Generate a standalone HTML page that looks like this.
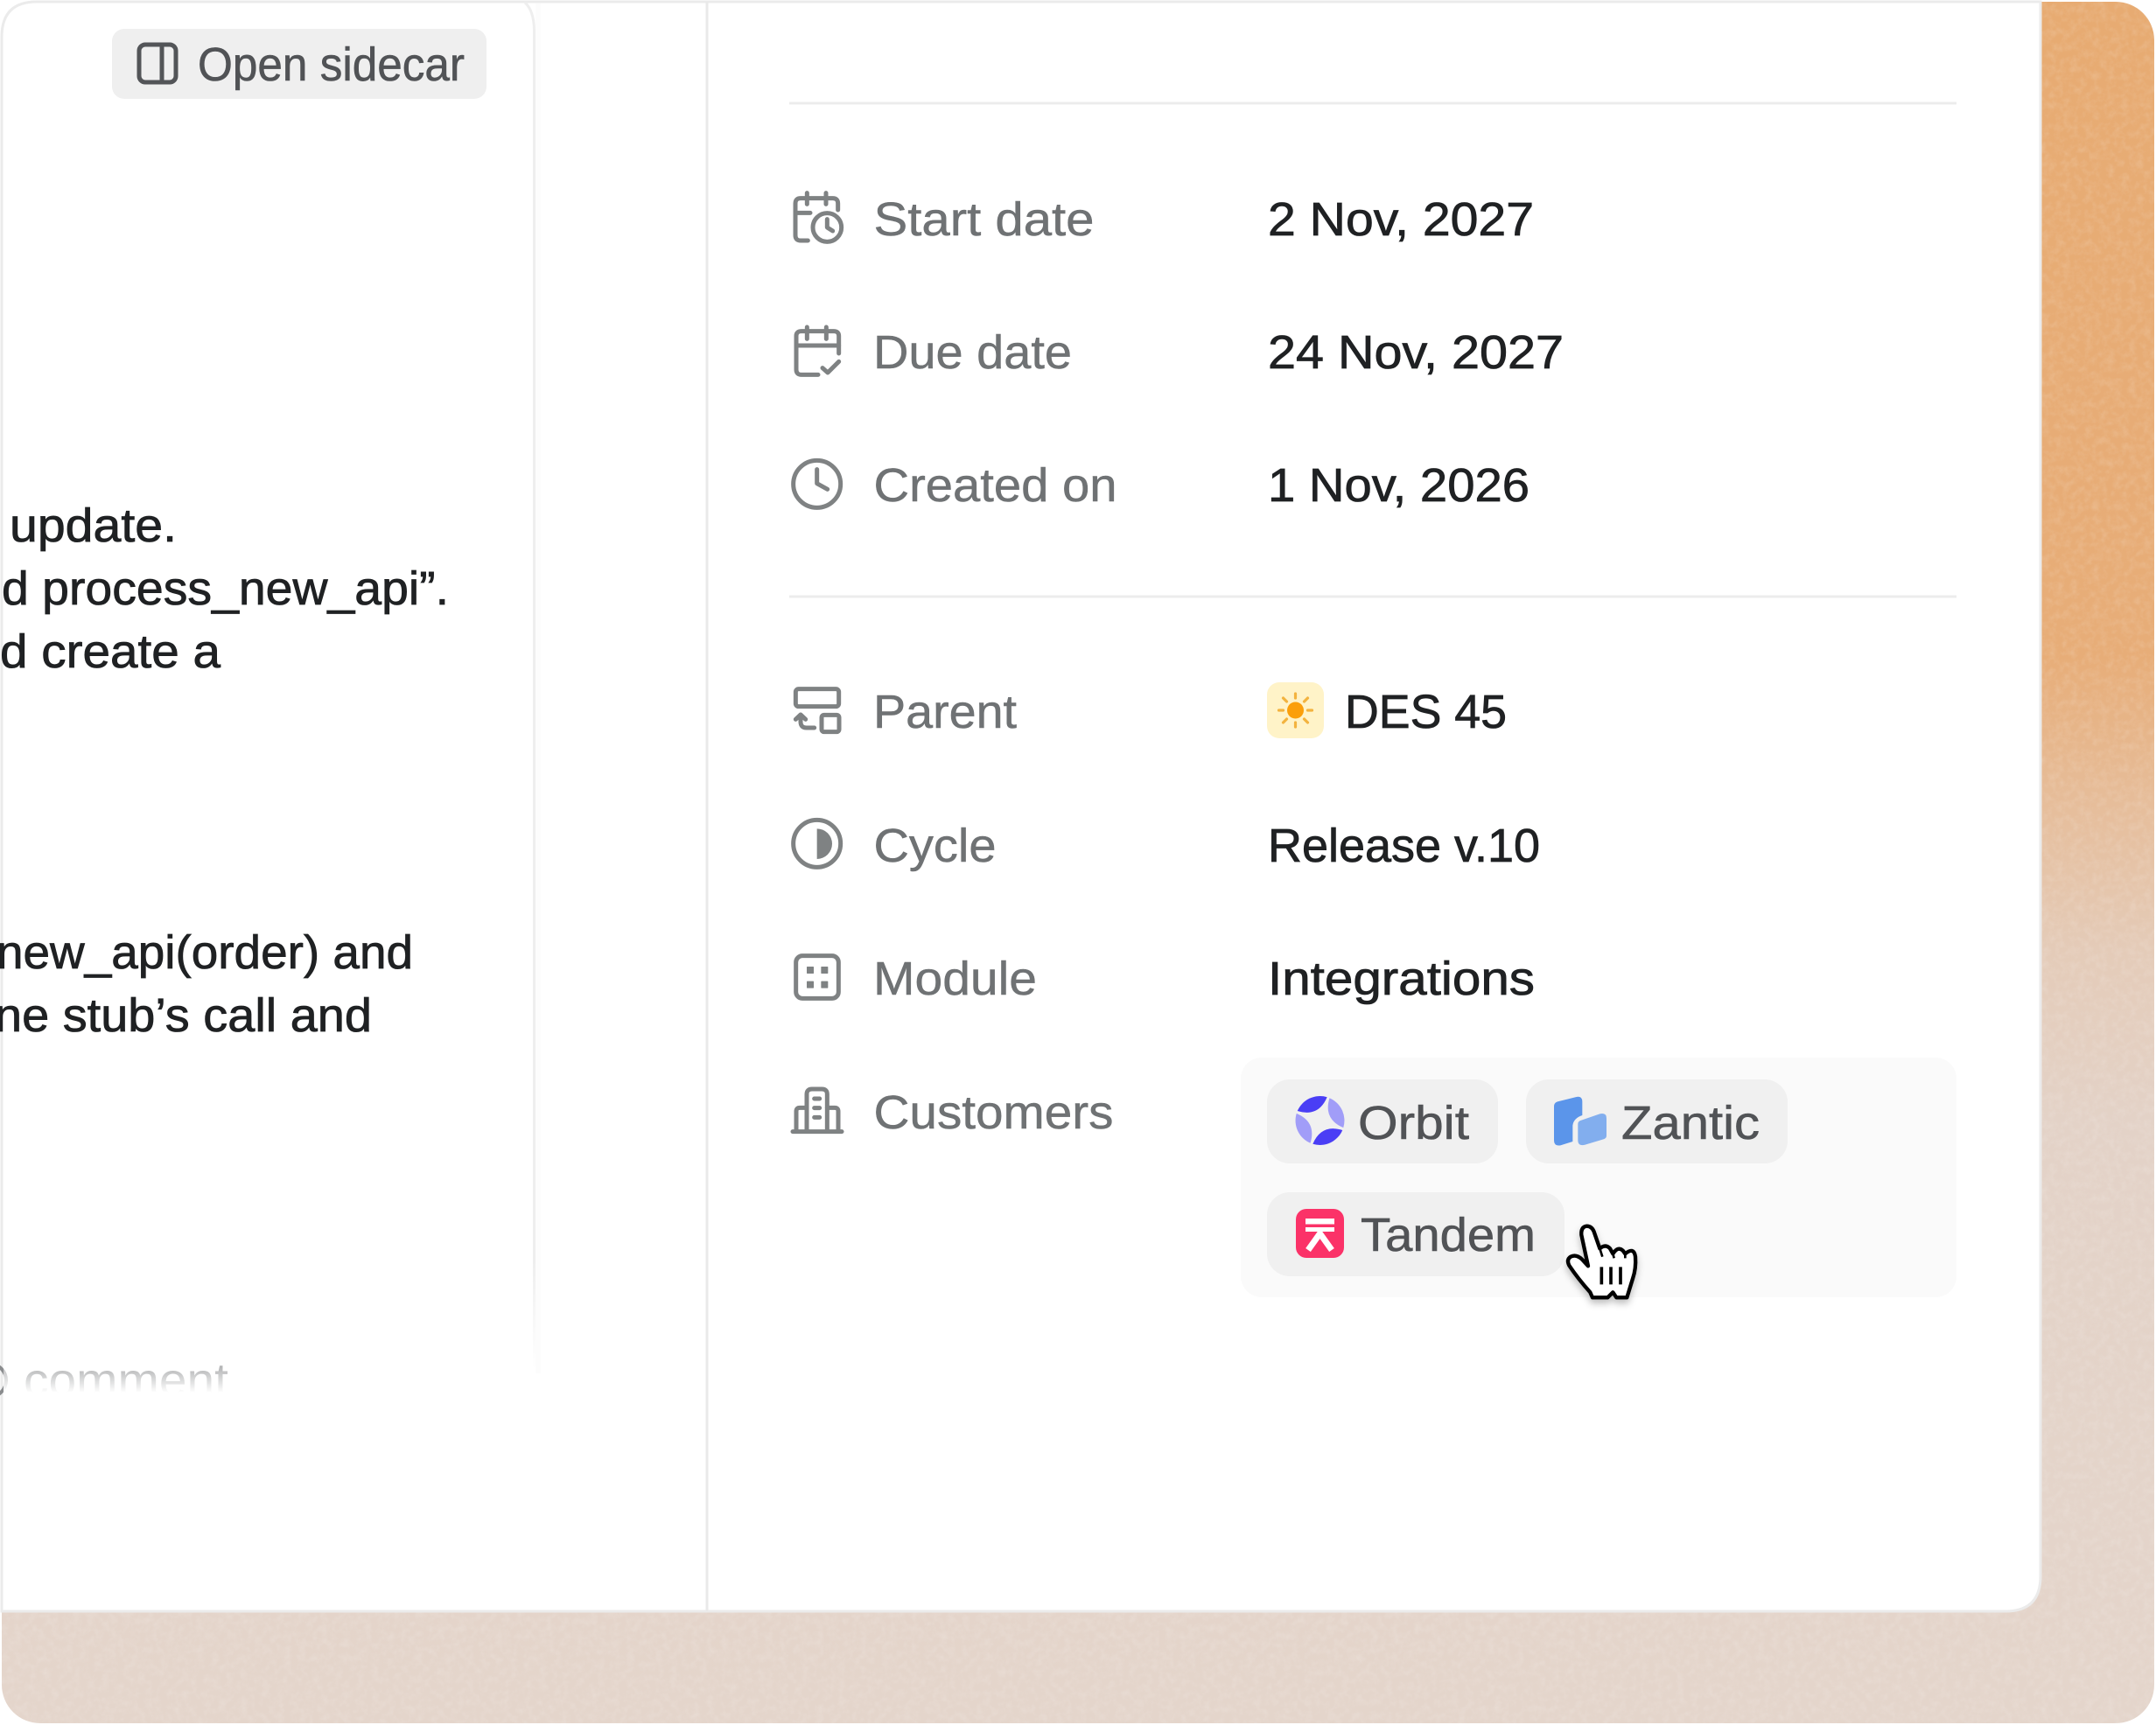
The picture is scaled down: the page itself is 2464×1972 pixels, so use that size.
<!DOCTYPE html>
<html lang="en">
<head>
<meta charset="utf-8">
<title>Issue properties</title>
<style>
html,body{margin:0;padding:0;background:#fff;width:2464px;height:1972px;overflow:hidden}
svg{display:block}
text{font-family:"Liberation Sans",sans-serif}
.l{font-size:54px;fill:#6f7274;stroke:#6f7274;stroke-width:.5px}
.v{font-size:54px;fill:#1f2123;stroke:#1f2123;stroke-width:.8px}
.p{font-size:54px;fill:#515356;stroke:#515356;stroke-width:.6px}
.i{fill:none;stroke:#7f8283;stroke-linecap:round;stroke-linejoin:round}
</style>
</head>
<body>
<svg width="2464" height="1972" viewBox="0 0 2464 1972" xmlns="http://www.w3.org/2000/svg">
<defs>
<linearGradient id="bg" x1="0" y1="0" x2="0" y2="1">
<stop offset="0" stop-color="#E7AB72"/>
<stop offset="0.38" stop-color="#E7AD78"/>
<stop offset="0.46" stop-color="#E6BC98"/>
<stop offset="0.55" stop-color="#E4CBB8"/>
<stop offset="0.65" stop-color="#E3D2C7"/>
<stop offset="1" stop-color="#E4D5CB"/>
</linearGradient>
<filter id="noise" x="0" y="0" width="100%" height="100%">
<feTurbulence type="fractalNoise" baseFrequency="0.12" numOctaves="4" seed="4"/>
<feColorMatrix type="matrix" values="0 0 0 0 1  0 0 0 0 1  0 0 0 0 1  1.6 0 0 0 -0.62"/>
</filter>
<linearGradient id="fade" x1="0" y1="0" x2="0" y2="1">
<stop offset="0" stop-color="#fff" stop-opacity="0.25"/>
<stop offset="1" stop-color="#fff" stop-opacity="1"/>
</linearGradient>
<linearGradient id="lineFade" x1="0" y1="0" x2="0" y2="1">
<stop offset="0" stop-color="#eeeeee"/>
<stop offset="1" stop-color="#eeeeee" stop-opacity="0"/>
</linearGradient>
<filter id="cs" x="-30%" y="-30%" width="160%" height="170%">
<feDropShadow dx="0" dy="14" stdDeviation="12" flood-color="#000" flood-opacity=".25"/>
</filter>
</defs>

<!-- backdrop -->
<rect x="2" y="2" width="2460" height="1968" rx="44" fill="url(#bg)"/>
<rect x="2" y="2" width="2460" height="1968" rx="44" filter="url(#noise)" opacity=".17"/>

<!-- card -->
<path d="M2 42 Q2 2 42 2 H2332 V1802 Q2332 1842 2292 1842 H2 Z" fill="#fff" stroke="#ebebeb" stroke-width="3"/>
<rect x="612" y="4" width="6" height="1566" fill="#fcfcfc"/>
<path d="M600 3 Q610 12 610.500 34 V1440" fill="none" stroke="#eeeeee" stroke-width="3"/>
<rect x="609" y="1440" width="3" height="125" fill="url(#lineFade)"/>
<rect x="806.500" y="2" width="3" height="1840" fill="#e9e9e9"/>

<!-- open sidecar -->
<rect x="128" y="33" width="428" height="80" rx="14" fill="#efefef"/>
<g fill="none" stroke="#535558" stroke-width="5">
<rect x="159" y="51" width="42" height="43" rx="7"/>
<path d="M185 51 V94"/>
</g>
<text class="p" x="226" y="92" textLength="305" lengthAdjust="spacingAndGlyphs">Open sidecar</text>

<!-- left text -->
<text class="v" x="11" y="619" textLength="191" lengthAdjust="spacingAndGlyphs">update.</text>
<text class="v" x="2" y="691" textLength="511" lengthAdjust="spacingAndGlyphs">d process_new_api”.</text>
<text class="v" x="0" y="763" textLength="252" lengthAdjust="spacingAndGlyphs">d create a</text>
<text class="v" x="-4" y="1107" textLength="476" lengthAdjust="spacingAndGlyphs">new_api(order) and</text>
<text class="v" x="-6" y="1179" textLength="431" lengthAdjust="spacingAndGlyphs">ne stub’s call and</text>
<text x="27" y="1596" font-size="54" fill="#77797b" textLength="234" lengthAdjust="spacingAndGlyphs">comment</text>
<circle cx="-12" cy="1578" r="19" fill="none" stroke="#8a8c8e" stroke-width="4"/>
<rect x="4" y="1552" width="440" height="40" fill="url(#fade)"/>
<rect x="4" y="1592" width="440" height="26" fill="#fff"/>

<!-- dividers -->
<rect x="902" y="116.500" width="1334" height="3" fill="#ececec"/>
<rect x="902" y="680.500" width="1334" height="3" fill="#ececec"/>

<!-- icons group 1 -->
<g transform="translate(860,180) scale(.33333)" class="i" stroke-width="15">
<path d="M190 285 H165 Q147 285 147 267 V158 Q147 140 165 140 H275 Q293 140 293 158 V180"/>
<path d="M187 122 V160 M252 122 V160 M147 190 H198"/>
<circle cx="256" cy="240" r="49"/>
<path d="M256 212 V240 L275 252"/>
<path d="M225 745 H168 Q150 745 150 727 V612 Q150 596 168 596 H278 Q296 596 296 612 V672"/>
<path d="M187 582 V622 M253 582 V622 M150 645 H296"/>
<path d="M240 722 L258 738 L296 700"/>
<circle cx="221" cy="1120" r="81"/>
<path d="M221 1070 V1118 L257 1138"/>
</g>
<!-- icons group 2 -->
<g transform="translate(860,740) scale(.33333)" class="i" stroke-width="15">
<rect x="148" y="143" width="148" height="60" rx="10"/>
<rect x="237" y="232" width="60" height="58" rx="8"/>
<path d="M212 276 H185 Q165 276 165 255 V235"/>
<path d="M148 247 L165 231 L182 247"/>
<circle cx="221" cy="673" r="81"/>
<path d="M221 622 A52 52 0 0 1 221 726 Z" fill="#7f8283" stroke="none"/>
<rect x="149" y="1058" width="146" height="146" rx="22"/>
<g fill="#7f8283" stroke="none">
<rect x="186" y="1095" width="24" height="24" rx="2"/><rect x="235" y="1095" width="24" height="24" rx="2"/>
<rect x="186" y="1145" width="24" height="24" rx="2"/><rect x="235" y="1145" width="24" height="24" rx="2"/>
</g>
</g>
<!-- customers icon -->
<g transform="translate(890,1225) scale(.33333)" class="i" stroke-width="15">
<path d="M48 206 H216"/>
<path d="M96 204 V78 Q96 60 114 60 H148 Q166 60 166 78 V204"/>
<path d="M96 124 H72 Q60 124 60 136 V204"/>
<path d="M166 124 H192 Q204 124 204 136 V204"/>
<path d="M122 93 H140 M122 125 H140 M122 157 H140"/>
</g>

<!-- labels -->
<text class="l" x="998.500" y="269" textLength="252" lengthAdjust="spacingAndGlyphs">Start date</text>
<text class="l" x="998" y="421" textLength="227" lengthAdjust="spacingAndGlyphs">Due date</text>
<text class="l" x="998.500" y="573" textLength="278" lengthAdjust="spacingAndGlyphs">Created on</text>
<text class="l" x="998" y="832" textLength="164" lengthAdjust="spacingAndGlyphs">Parent</text>
<text class="l" x="998.500" y="985" textLength="140" lengthAdjust="spacingAndGlyphs">Cycle</text>
<text class="l" x="998" y="1137" textLength="187" lengthAdjust="spacingAndGlyphs">Module</text>
<text class="l" x="998.500" y="1290" textLength="274" lengthAdjust="spacingAndGlyphs">Customers</text>

<!-- values -->
<text class="v" x="1449" y="269" textLength="304" lengthAdjust="spacingAndGlyphs">2 Nov, 2027</text>
<text class="v" x="1449" y="421" textLength="338" lengthAdjust="spacingAndGlyphs">24 Nov, 2027</text>
<text class="v" x="1449" y="573" textLength="299" lengthAdjust="spacingAndGlyphs">1 Nov, 2026</text>
<text class="v" x="1537" y="832" textLength="185" lengthAdjust="spacingAndGlyphs">DES 45</text>
<text class="v" x="1449" y="985" textLength="311" lengthAdjust="spacingAndGlyphs">Release v.10</text>
<text class="v" x="1449" y="1137" textLength="305" lengthAdjust="spacingAndGlyphs">Integrations</text>

<!-- sun badge -->
<rect x="1448" y="780" width="65" height="64" rx="14" fill="#FFF3C8"/>
<circle cx="1480.500" cy="812" r="9.500" fill="#FB9F0B"/>
<g stroke="#F3B33F" stroke-width="3.200" stroke-linecap="round" transform="translate(1480.500,812)">
<path d="M0 -14 V-19 M0 14 V19 M-14 0 H-19 M14 0 H19 M-10 -10 L-14 -14 M10 -10 L14 -14 M-10 10 L-14 14 M10 10 L14 14"/>
</g>

<!-- customers panel -->
<rect x="1418" y="1209" width="818" height="274" rx="24" fill="#fafafa"/>
<rect x="1448" y="1234" width="264" height="96" rx="26" fill="#f0f0f0"/>
<rect x="1744" y="1234" width="299" height="96" rx="26" fill="#f0f0f0"/>
<rect x="1448" y="1363" width="340" height="96" rx="26" fill="#f0f0f0"/>

<!-- orbit logo -->
<g transform="translate(1508.500,1281)">
<path transform="rotate(-25)" d="M-18.700 -20.800 A28 28 0 0 1 18.700 -20.800 Q0 -4 -18.700 -20.800Z" fill="#4A3EF5"/>
<path transform="rotate(65)" d="M-18.700 -20.800 A28 28 0 0 1 18.700 -20.800 Q0 -4 -18.700 -20.800Z" fill="#A19DF8"/>
<path transform="rotate(155)" d="M-18.700 -20.800 A28 28 0 0 1 18.700 -20.800 Q0 -4 -18.700 -20.800Z" fill="#4A3EF5"/>
<path transform="rotate(245)" d="M-18.700 -20.800 A28 28 0 0 1 18.700 -20.800 Q0 -4 -18.700 -20.800Z" fill="#A19DF8"/>
</g>
<text class="p" x="1552" y="1302" textLength="127" lengthAdjust="spacingAndGlyphs">Orbit</text>

<!-- zantic logo -->
<g transform="translate(1760,1220) scale(.33333)">
<path d="M48 135 Q48 122 60 118 L125 102 Q145 98 145 118 V165 Q115 175 112 200 V255 L70 268 Q48 272 48 250 Z" fill="#5B95EA"/>
<path d="M130 195 Q130 185 142 182 L205 160 Q228 155 228 175 V235 Q228 245 215 248 L155 266 Q130 272 130 250Z" fill="#82AEEE"/>
</g>
<text class="p" x="1853" y="1302" textLength="158" lengthAdjust="spacingAndGlyphs">Zantic</text>

<!-- tandem logo -->
<rect x="1481" y="1382" width="55" height="56" rx="12" fill="#FB3268"/>
<g fill="#fff">
<rect x="1492" y="1393" width="33" height="6.500"/>
<rect x="1492" y="1403" width="33" height="5"/>
</g>
<path d="M1510 1408 L1495 1429 M1507 1408 L1522 1429" stroke="#fff" stroke-width="7" fill="none"/>
<text class="p" x="1555" y="1430" textLength="200" lengthAdjust="spacingAndGlyphs">Tandem</text>

<!-- hand cursor -->
<g transform="translate(1760,1220) scale(.33333)" filter="url(#cs)">
<path d="M180 790 L172 772 Q130 725 100 680 Q90 660 105 650 Q125 640 145 660 L165 682 L142 575 Q140 548 160 545 Q180 545 187 570 L205 622 Q225 605 240 622 L250 640 Q268 612 285 630 L292 640 Q322 615 327 650 Q330 690 318 725 L298 790 L262 790 L250 772 L232 790 Z" fill="#fff" stroke="#000" stroke-width="13" stroke-linejoin="round"/>
<path d="M211 685 V745 M243 685 V745 M276 685 V745" stroke="#000" stroke-width="11" fill="none"/>
<path d="M205 622 L214 650 M250 640 L254 655 M292 640 L292 655" stroke="#000" stroke-width="8" fill="none"/>
</g>
</svg>
</body>
</html>
